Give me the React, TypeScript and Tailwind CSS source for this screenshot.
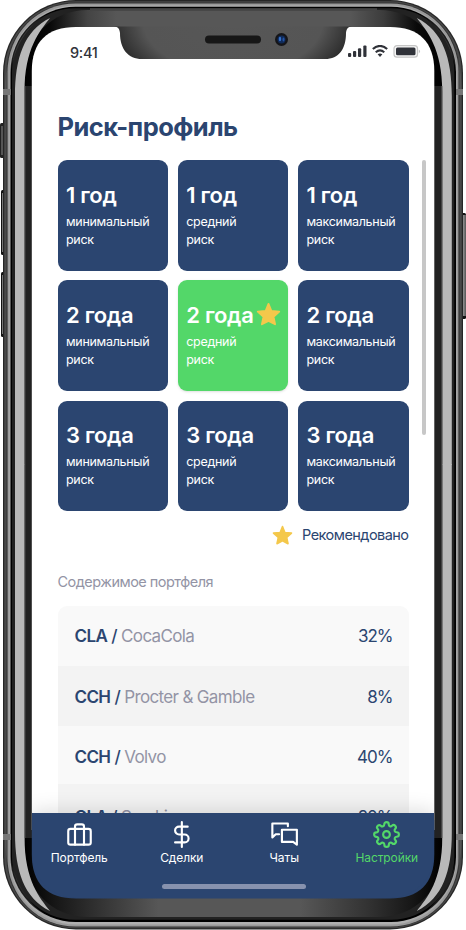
import React from "react";

const cards = [
  ["1 год", "минимальный"],
  ["1 год", "средний"],
  ["1 год", "максимальный"],
  ["2 года", "минимальный"],
  ["2 года", "средний"],
  ["2 года", "максимальный"],
  ["3 года", "минимальный"],
  ["3 года", "средний"],
  ["3 года", "максимальный"],
];

const holdings = [
  ["CLA", "CocaCola", "32%"],
  ["CCH", "Procter & Gamble", "8%"],
  ["CCH", "Volvo", "40%"],
  ["CLA", "Smoking", "20%"],
];

function Star({ className }: { className: string }) {
  return (
    <svg viewBox="0 0 24 24" className={className} fill="#f4c84b" stroke="#f4c84b" strokeWidth="1.8" strokeLinejoin="round">
      <path d="M12 1.800l2.700 6.700 7.600.700-5.500 5 1.500 7.200-6.300-3.300-6.300 3.300 1.500-7.200-5.500-5 7.600-.700z" />
    </svg>
  );
}

function Half() {
  return (
    <>
      <path d="M15 465V96C15 58 24 31 50 18C40 31 24.500 48 24.500 92V465Z" fill="#b9b9b9" />
      <path d="M5 90C5 50 25 13 62 6C36 16 10 40 9 90Z" fill="#8a8a8a" opacity=".2" />
    </>
  );
}

function Frame() {
  return (
    <svg viewBox="0 0 466 930" className="absolute inset-0 h-[930px] w-[466px]">
      <defs>
        <linearGradient id="face" x1="25" x2="442" y1="0" y2="0" gradientUnits="userSpaceOnUse">
          <stop offset="0" stopColor="#000" />
          <stop offset=".06" stopColor="#090909" />
          <stop offset=".15" stopColor="#444" />
          <stop offset=".22" stopColor="#575757" />
          <stop offset=".78" stopColor="#575757" />
          <stop offset=".86" stopColor="#3c3c3c" />
          <stop offset=".94" stopColor="#090909" />
          <stop offset="1" stopColor="#000" />
        </linearGradient>
        <linearGradient id="faceBottom" x1="25" x2="442" y1="0" y2="0" gradientUnits="userSpaceOnUse">
          <stop offset="0" stopColor="#000" />
          <stop offset=".07" stopColor="#161616" />
          <stop offset=".18" stopColor="#333" />
          <stop offset=".32" stopColor="#575757" />
          <stop offset=".66" stopColor="#575757" />
          <stop offset=".82" stopColor="#333" />
          <stop offset=".93" stopColor="#161616" />
          <stop offset="1" stopColor="#000" />
        </linearGradient>
        <radialGradient id="notch" cx="233" cy="20" r="125" gradientUnits="userSpaceOnUse" gradientTransform="translate(0 8) scale(1 .6)">
          <stop offset="0" stopColor="#575757" />
          <stop offset=".72" stopColor="#555" />
          <stop offset="1" stopColor="#272727" />
        </radialGradient>
        <linearGradient id="button">
          <stop offset="0" stopColor="#333" />
          <stop offset=".5" stopColor="#888" />
          <stop offset="1" stopColor="#555" />
        </linearGradient>
      </defs>
      <rect x="0" y="123" width="5" height="35" rx="1.500" fill="#222" />
      <rect x="1" y="126" width="2.500" height="29" fill="#555" />
      <rect x="1" y="190" width="5" height="65" rx="1.500" fill="#111" />
      <rect x="2" y="193" width="3" height="59" fill="#777" />
      <rect x="1" y="272" width="5" height="65" rx="1.500" fill="#111" />
      <rect x="2" y="275" width="3" height="59" fill="#777" />
      <rect x="460" y="213" width="6" height="106" rx="1.500" fill="#111" />
      <rect x="461" y="215" width="5" height="101" fill="url(#button)" />
      <rect x="3" y="0" width="460" height="929.500" rx="73" fill="#262626" />
      <rect x="4.200" y="1.200" width="457.600" height="927.100" rx="72" fill="#484848" />
      <rect x="6.500" y="2.500" width="453" height="924.800" rx="69" fill="#333" />
      <rect x="7.600" y="3.400" width="450.800" height="923.200" rx="68" fill="#9a9a9a" />
      <rect x="9.500" y="5.500" width="447" height="919" rx="66" fill="#b0b0b0" />
      <rect x="10.500" y="6.800" width="445.500" height="915.200" rx="65" fill="#000" />
      <rect x="12" y="8.200" width="442.300" height="911.500" rx="63" fill="#222" />
      <path d="M25 86V73C25 37 52 10 88 10H379C415 10 442 37 442 73V86Z" fill="url(#face)" />
      <path d="M25 838V854C25 890 52 917 88 917H379C415 917 442 890 442 854V838Z" fill="url(#faceBottom)" />
      <rect x="90" y="8.200" width="287" height="2.600" fill="#444" />
      <Half />
      <g transform="translate(466.800 0) scale(-1 1)"><Half /></g>
      <g transform="translate(0 929) scale(1 -1)"><Half /></g>
      <g transform="translate(466.800 929) scale(-1 -1)"><Half /></g>
      <rect x="24.300" y="86" width="1" height="752" fill="#666" />
      <rect x="441.500" y="86" width="1" height="752" fill="#666" />
      <g fill="#777">
        <rect x="3" y="89" width="8" height="6" />
        <rect x="456" y="89" width="7" height="6" />
        <rect x="3" y="834" width="8" height="6" />
        <rect x="456" y="834" width="7" height="6" />
      </g>
      <path d="M31.800 830V71C31.800 42 47 27 76 27H390C419 27 434.300 42 434.300 71V830Z" fill="#fff" />
      <path d="M31.800 820V854.500C31.800 883.500 47 898.500 76 898.500H390C419 898.500 434.300 883.500 434.300 854.500V820Z" fill="#2b4570" />
      <path d="M114 26.500C118 27 119.500 28.500 120 33C120 49 128 59 142 59H325C339 59 346 49 346 33C346.500 28.500 348 27 352 26.500Z" fill="url(#notch)" />
      <rect x="205" y="35.500" width="56" height="8" rx="4" fill="#171717" />
      <circle cx="281.500" cy="39.500" r="6.500" fill="#151518" />
      <circle cx="281.500" cy="39.500" r="4" fill="#102a58" />
      <ellipse cx="280" cy="39" rx="1.200" ry="2.300" fill="#3470c8" />
      <ellipse cx="283.500" cy="39.500" rx="1" ry="2" fill="#2454a4" />
    </svg>
  );
}

function StatusIcons() {
  return (
    <svg viewBox="0 0 74 14" className="mt-px h-[14px] w-[74px]" fill="#303239">
      <rect x="0" y="8" width="3.200" height="4" rx="1" />
      <rect x="5" y="6" width="3.200" height="6" rx="1" />
      <rect x="10" y="3.200" width="3.200" height="8.800" rx="1" />
      <rect x="15.300" y=".600" width="3.200" height="11.400" rx="1" />
      <g fill="none" stroke="#303239" strokeWidth="2">
        <path d="M24.800 4.100Q32-2.300 39.200 4.100" />
        <path d="M27.700 7.200Q32 3.500 36.300 7.200" />
      </g>
      <path d="M29.600 9.300Q32 7.500 34.400 9.300L32 12Z" />
      <rect x="46" y=".600" width="23.500" height="11.600" rx="3" fill="#f6f6f6" stroke="#c5c5c5" strokeWidth="1.200" />
      <rect x="48" y="2.500" width="19.500" height="7.800" rx="1.500" />
      <path d="M70.800 4.500Q73.500 6.300 70.800 8.400Z" fill="#c5c5c5" />
    </svg>
  );
}

const icons = [
  <g key="p"><rect x="2" y="7" width="20" height="14" rx="2" /><path d="M16 21V5a2 2 0 0 0-2-2h-4a2 2 0 0 0-2 2v16" /></g>,
  <g key="d"><path d="M12.300 1v22M17.500 5H9.800a3.500 3.500 0 0 0 0 7h5a3.500 3.500 0 0 1 0 7H6.300" /></g>,
  <g key="c"><path d="M15 4.600V2.200H1.200v12.400l3-2.800h3M9.700 7.800H23v13.300l-3.300-2.500h-10z" /></g>,
  <g key="s"><circle cx="12" cy="12" r="3" /><path d="M19.400 15a1.650 1.650 0 0 0 .33 1.820l.06.06a2 2 0 0 1-2.830 2.830l-.06-.06a1.650 1.650 0 0 0-1.820-.33 1.650 1.650 0 0 0-1 1.510V21a2 2 0 0 1-4 0v-.09A1.650 1.650 0 0 0 9 19.400a1.650 1.650 0 0 0-1.820.33l-.06.06a2 2 0 0 1-2.830-2.830l.06-.06a1.650 1.650 0 0 0 .33-1.820 1.650 1.650 0 0 0-1.510-1H3a2 2 0 0 1 0-4h.09A1.650 1.650 0 0 0 4.600 9a1.650 1.650 0 0 0-.33-1.820l-.06-.06a2 2 0 0 1 2.830-2.830l.06.06a1.650 1.650 0 0 0 1.820.33H9a1.650 1.650 0 0 0 1-1.510V3a2 2 0 0 1 4 0v.09a1.650 1.650 0 0 0 1 1.510 1.650 1.650 0 0 0 1.820-.33l.06-.06a2 2 0 0 1 2.830 2.830l-.06.06a1.650 1.650 0 0 0-.33 1.820V9a1.650 1.650 0 0 0 1.510 1H21a2 2 0 0 1 0 4h-.09a1.650 1.650 0 0 0-1.510 1z" /></g>,
];
const tabs = ["Портфель", "Сделки", "Чаты", "Настройки"];

export default function App() {
  return (
    <div className="relative h-[930px] w-[466px] overflow-hidden bg-white pl-8 pt-[27px] font-['Inter',sans-serif] text-[#2b4570]">
      <Frame />
      <div className="relative flex h-[871px] w-[402px] flex-col overflow-hidden rounded-b-[44px]">
        <header className="flex h-[60px] shrink-0 items-start justify-between pl-[38px] pr-[12px] pt-[17px]">
          <span className="text-[14.500px] font-medium leading-[17px] tracking-[-0.3px] text-[#303239]">9:41</span>
          <StatusIcons />
        </header>
        <main className="h-[726px] shrink-0 overflow-hidden pl-[25.500px]">
          <h1 className="mt-[22px] text-[25.500px] font-bold leading-9 tracking-[-0.540px]">Риск-профиль</h1>
          <div className="mt-[15px] flex">
            <section className="grid w-[351px] shrink-0 grid-cols-3 gap-[9.750px]">
              {cards.map(([year, risk], i) => (
                <article key={i} className={`h-[110.500px] rounded-[9px] pl-[8.500px] pt-[20.500px] text-white ${i === 4 ? "bg-[#53d769] shadow-sm" : "bg-[#2b4570]"}`}>
                  <div className="flex items-center">
                    <h2 className="whitespace-nowrap text-[22px] font-semibold leading-[28px] tracking-[-0.300px]">{year}</h2>
                    {i === 4 && <Star className="ml-[2px] size-[25px] shrink-0" />}
                  </div>
                  <p className="mt-[4px] text-[12.500px] leading-[18.300px] tracking-[-0.300px]">{risk}<br />риск</p>
                </article>
              ))}
            </section>
            <div className="ml-[13px] h-[275px] w-[4.500px] rounded-full bg-[#c7c7c7]" />
          </div>
          <div className="mt-[13px] flex h-[22px] w-[351px] items-center justify-end gap-[9px] text-[14.500px] tracking-[-0.540px]">
            <Star className="size-[21px]" />
            <span>Рекомендовано</span>
          </div>
          <h3 className="mt-[26px] text-[14.500px] leading-[20px] tracking-[-0.530px] text-[#9394a5]">Содержимое портфеля</h3>
          <section className="mt-[14px] w-[351px] overflow-hidden rounded-t-[9px]">
            {holdings.map(([ticker, name, share], i) => (
              <div key={i} className={`flex items-center justify-between pl-[17px] pr-[16px] pt-[2px] text-[17px] tracking-[-0.660px] ${i === 3 ? "h-[65px]" : i === 2 ? "h-[57.500px] pt-[5px]" : "h-[60.200px]"} ${i % 2 ? "bg-[#f3f3f3]" : "bg-[#f9f9f9]"}`}>
                <div><b className="font-semibold tracking-[-0.600px]">{ticker}</b> <span className="font-medium">/</span> <span className="text-[#9394a5]">{name}</span></div>
                <span className="tracking-[-1px]">{share}</span>
              </div>
            ))}
          </section>
        </main>
        <nav className="relative flex h-[85px] shrink-0 flex-col bg-[#2b4570] text-white shadow-[0_-3px_18px_rgba(0,0,0,0.13)]">
          <div className="flex -translate-x-[4px]">
            {tabs.map((tab, i) => (
              <div key={tab} className={`flex w-[102.500px] shrink-0 flex-col items-center pt-[8px] ${i === 3 ? "text-[#53d769]" : ""}`}>
                <svg viewBox="0 0 24 24" className="size-[27px]" fill="none" stroke="currentColor" strokeWidth="1.900" strokeLinecap="round" strokeLinejoin="round">{icons[i]}</svg>
                <span className="mt-[2px] text-[12px] leading-[16px] tracking-[-0.100px]">{tab}</span>
              </div>
            ))}
          </div>
          <div className="ml-[130px] mt-[18px] h-[5px] w-[144px] rounded-full bg-[#8792ae]" />
        </nav>
      </div>
    </div>
  );
}
